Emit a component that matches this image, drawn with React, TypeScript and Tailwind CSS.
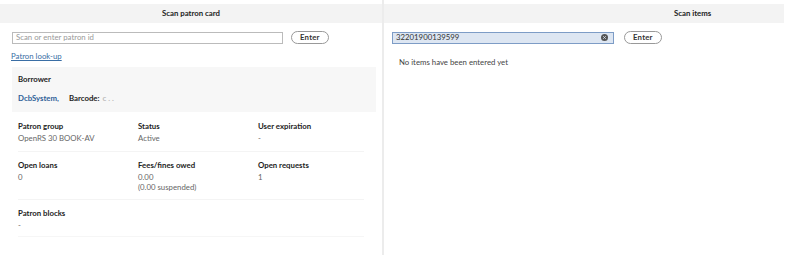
import React from 'react';

const font = { fontFamily: 'Lato, "Noto Sans", sans-serif' };

const Field = ({ label, children }: { label: string; children: React.ReactNode }) => (
  <div className="w-[120px] shrink-0">
    <div className="text-[7.8px] font-bold text-[#222] leading-[10px]">{label}</div>
    <div className="text-[7.8px] text-[#666] leading-[10px] mt-[2px]">{children}</div>
  </div>
);

const EnterButton = () => (
  <button className="h-[13px] px-[8px] rounded-full border border-[#999] bg-white text-[7.8px] font-bold text-[#333] leading-none tracking-wide">
    Enter
  </button>
);

export default function App() {
  return (
    <div className="w-[800px] h-[255px] bg-white flex text-[#333]" style={font}>
      {/* Left pane */}
      <div className="w-[384px] h-full border-r-2 border-[#ececec] pt-[4px]">
        <div className="h-[19px] bg-[#f3f3f3] flex items-center justify-center text-[7.8px] font-bold text-[#222]">
          Scan patron card
        </div>
        <div className="px-[12px] pt-[8px]">
          <div className="flex items-center gap-[8px]">
            <div className="w-[271px] h-[12px] border border-[#bbb] bg-white flex items-center px-[3px] text-[7.8px] text-[#999]">
              Scan or enter patron id
            </div>
            <EnterButton />
          </div>
          <div className="mt-[7px] text-[7.8px] text-[#3a6ea5] underline leading-[10px] -ml-[1px]">Patron look-up</div>
          <div className="mt-[6px] w-[364px] h-[45px] bg-[#f7f7f7] px-[6px] pt-[7px]">
            <div className="text-[7.8px] font-bold text-[#222] leading-[10px]">Borrower</div>
            <div className="mt-[9px] flex items-center text-[7.8px] leading-[10px] font-bold">
              <span className="text-[#2f5f98]">DcbSystem,</span>
              <span className="ml-[10px] text-[#222]">Barcode:</span>
              <span className="ml-[3px] text-[#bbb]">c . .</span>
            </div>
          </div>
          <div className="w-[358px] px-[6px]">
            <div className="flex pt-[9px] pb-[8px] border-b border-[#f4f4f4]">
              <Field label="Patron group">OpenRS 30 BOOK-AV</Field>
              <Field label="Status">Active</Field>
              <Field label="User expiration">-</Field>
            </div>
            <div className="flex pt-[8px] h-[48px] border-b border-[#f4f4f4]">
              <Field label="Open loans">0</Field>
              <Field label="Fees/fines owed">
                0.00
                <br />
                (0.00 suspended)
              </Field>
              <Field label="Open requests">1</Field>
            </div>
            <div className="pt-[8px] h-[37px] border-b border-[#f6f6f6]">
              <Field label="Patron blocks">-</Field>
            </div>
          </div>
        </div>
      </div>

      {/* Right pane */}
      <div className="w-[400px] h-full pt-[4px]">
        <div className="h-[19px] bg-[#f3f3f3] flex items-center pl-[290px] text-[7.8px] font-bold text-[#222]">
          Scan items
        </div>
        <div className="pl-[8px] pt-[8px]">
          <div className="flex items-center gap-[10px]">
            <div className="w-[222px] h-[12px] border border-[#7d9cc6] bg-[#dde6f2] flex items-center justify-between px-[3px] text-[7.8px] text-[#333]">
              <span>32201900139599</span>
              <svg width="7" height="7" viewBox="0 0 10 10" className="mr-[2px]">
                <circle cx="5" cy="5" r="5" fill="#555" />
                <path d="M3.2 3.2 L6.8 6.8 M6.8 3.2 L3.2 6.8" stroke="#dde6f2" strokeWidth="1.3" />
              </svg>
            </div>
            <EnterButton />
          </div>
          <div className="mt-[13px] ml-[7px] text-[7.8px] text-[#444] leading-[10px]">No items have been entered yet</div>
        </div>
      </div>
    </div>
  );
}
